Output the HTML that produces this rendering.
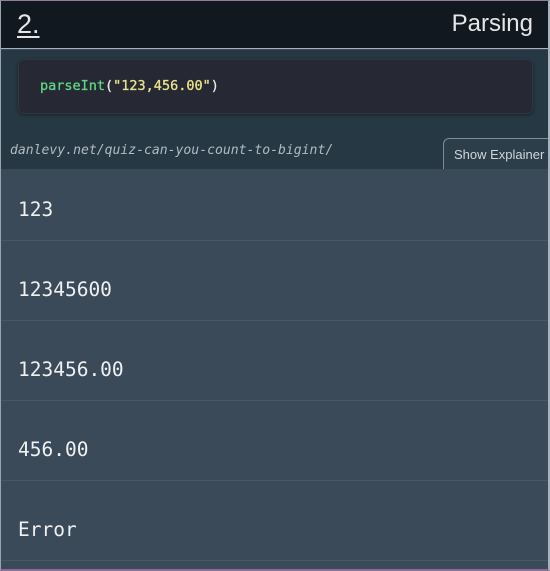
<!DOCTYPE html>
<html><head><style>
*{margin:0;padding:0;box-sizing:border-box}
body{width:550px;height:571px;background:#3a4a58;overflow:hidden;position:relative;font-family:"Liberation Sans",sans-serif}
.frame{position:absolute;inset:0;border-left:1px solid #9aa4ad;border-right:2px solid #a9b2ba;border-top:1px solid #8f7f9a;border-bottom:2px solid #8a6e96;z-index:5}
.hdr{position:absolute;left:0;top:0;width:550px;height:49px;background:#111820;border-bottom:1px solid #a8b0b8;z-index:3}
.num{position:absolute;left:17px;top:9px;color:#e6e6e6;font-size:27px;text-decoration:underline;text-underline-offset:3px}
.title{position:absolute;right:17px;top:10px;color:#e6e6e6;font-size:24px}
.top{position:absolute;left:1px;top:50px;width:547px;height:119px;background:#253843;z-index:2}
.code{position:absolute;left:18px;top:59px;width:515px;height:55px;background:#262833;border-radius:6px;border:1px solid #323542;box-shadow:0 1px 3px rgba(0,0,0,.4);z-index:3}
.ct{position:absolute;left:21px;top:18px;font-family:"DejaVu Sans Mono",monospace;font-size:13.5px;color:#e6e6e6;white-space:pre;-webkit-text-stroke:0.3px}
.g{color:#5fd783}.y{color:#e8e58a}
.url{position:absolute;left:10px;top:143px;font-family:"DejaVu Sans Mono",monospace;font-style:italic;font-size:13.1px;color:#b3bac0;z-index:3}
.btn{position:absolute;left:443px;top:138px;width:107px;height:31px;background:#2c3e4a;border:1px solid #7f8c96;border-bottom:none;border-radius:6px 0 0 0;color:#d0d6db;font-size:13px;padding:8px 0 0 10px;z-index:3}
.opt{position:absolute;left:1px;width:547px;height:80px;border-bottom:1px solid #475767;font-family:"DejaVu Sans Mono",monospace;font-size:19.5px;line-height:23px;color:#eef0f2;padding:37px 0 0 17px}
</style></head><body>
<div class="hdr"><div class="num">2.</div><div class="title">Parsing</div></div>
<div class="top"></div>
<div class="code"><div class="ct"><span class="g">parseInt</span>(<span class="y">"123,456.00"</span>)</div></div>
<div class="url">danlevy.net/quiz-can-you-count-to-bigint/</div>
<div class="btn">Show Explainer</div>
<div class="opt" style="top:161px">123</div>
<div class="opt" style="top:241px">12345600</div>
<div class="opt" style="top:321px">123456.00</div>
<div class="opt" style="top:401px">456.00</div>
<div class="opt" style="top:481px">Error</div>
<div class="frame"></div>
</body></html>
